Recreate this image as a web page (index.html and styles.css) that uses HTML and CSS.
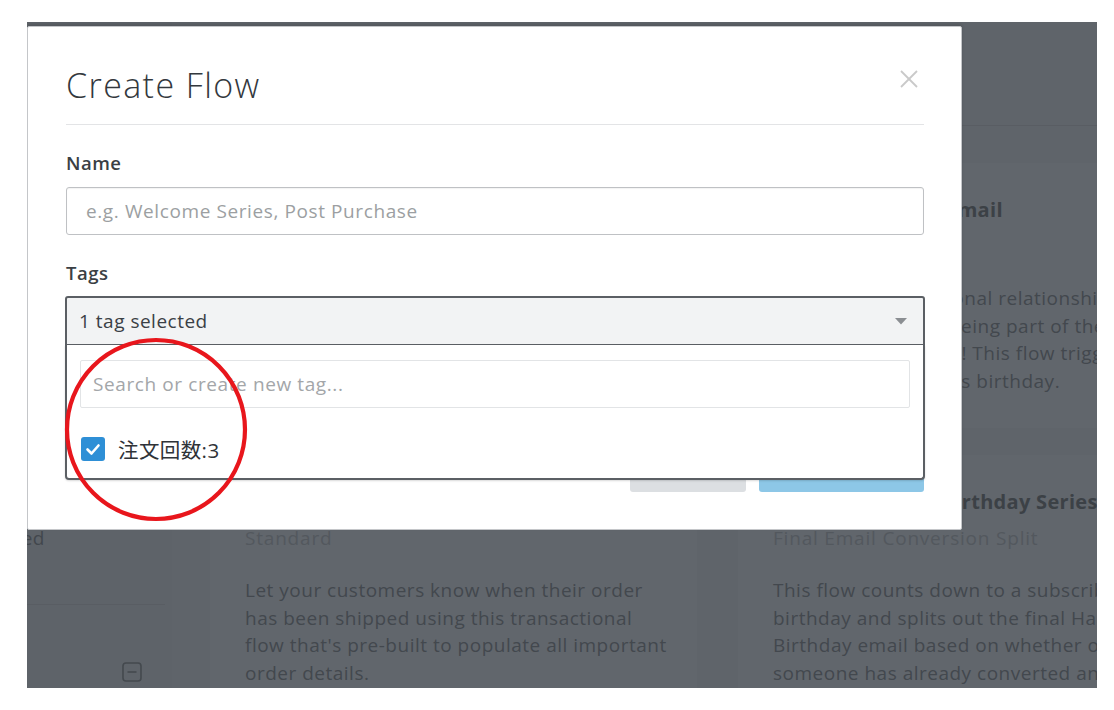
FILE: index.html
```html
<!DOCTYPE html>
<html lang="en">
<head>
<meta charset="utf-8">
<title>Create Flow</title>
<link rel="stylesheet" href="styles.css">
</head>
<body>
<div class="stage">
  <div class="app">
    <aside class="sidebar">
      <div class="side-item"><span class="side-label">Archived</span></div>
      <div class="side-sep"></div>
      <div class="side-foot">
        <svg class="collapse-icon" width="20" height="20" viewBox="0 0 20 20"><rect x="1" y="1" width="18" height="18" rx="3" fill="none" stroke="#44494e" stroke-width="1.6"/><line x1="5.5" y1="10" x2="14.5" y2="10" stroke="#44494e" stroke-width="1.6"/></svg>
      </div>
    </aside>
    <main class="main">
      <header class="main-head"><h1 class="main-title">Browse Flow Templates</h1></header>
      <div class="cards">
        <article class="card">
          <h3 class="card-title">Abandoned Cart Reminder</h3>
          <div class="card-sub">Standard</div>
          <p class="card-text">Recapture lost sales with this flow that<br>reminds customers about the items they<br>left behind in their cart.</p>
        </article>
        <article class="card">
          <h3 class="card-title">Annual Birthday Email</h3>
          <div class="card-sub">Standard</div>
          <p class="card-text">Create a more personal relationship<br>with customers by being part of their<br>special day this year! This flow triggers<br>on every subscriber's birthday.</p>
        </article>
        <article class="card">
          <h3 class="card-title">Shipping Confirmation</h3>
          <div class="card-sub">Standard</div>
          <p class="card-text">Let your customers know when their order<br>has been shipped using this transactional<br>flow that's pre-built to populate all important<br>order details.</p>
        </article>
        <article class="card">
          <h3 class="card-title">Countdown to a Birthday Series</h3>
          <div class="card-sub">Final Email Conversion Split</div>
          <p class="card-text">This flow counts down to a subscriber's<br>birthday and splits out the final Happy<br>Birthday email based on whether or not<br>someone has already converted and placed</p>
        </article>
      </div>
    </main>
  </div>

  <div class="modal">
    <div class="modal-head">
      <h2 class="modal-title">Create Flow</h2>
      <svg class="close-x" width="18" height="18" viewBox="0 0 18 18"><line x1="1" y1="1" x2="17" y2="17" stroke="#c9c9c9" stroke-width="1.8"/><line x1="17" y1="1" x2="1" y2="17" stroke="#c9c9c9" stroke-width="1.8"/></svg>
    </div>
    <div class="field">
      <label class="field-label">Name</label>
      <div class="text-input"><span class="placeholder">e.g. Welcome Series, Post Purchase</span></div>
    </div>
    <div class="field">
      <label class="field-label">Tags</label>
      <div class="tag-select">
        <div class="tag-value">1 tag selected</div>
        <svg class="caret" width="12" height="7" viewBox="0 0 12 7"><polygon points="0,0 12,0 6,6.5" fill="#8b8e92"/></svg>
        <div class="tag-menu">
          <div class="tag-search"><span class="placeholder">Search or create new tag...</span></div>
          <div class="tag-option">
            <span class="checkbox"><svg width="24" height="24" viewBox="0 0 24 24"><polyline points="6.5,12.5 10.5,16.5 17.5,8.5" fill="none" stroke="#fff" stroke-width="2.6" stroke-linecap="round" stroke-linejoin="round"/></svg></span>
            <span class="tag-name">注文回数:3</span>
          </div>
        </div>
      </div>
    </div>
    <div class="modal-foot">
      <button class="btn btn-cancel">Cancel</button>
      <button class="btn btn-primary">Create Flow</button>
    </div>
  </div>
</div>
<svg class="annotation" width="194" height="192" viewBox="0 0 194 192"><ellipse cx="96" cy="95.5" rx="89" ry="89.5" fill="none" stroke="#e8161c" stroke-width="4.2"/></svg>
</body>
</html>
```

FILE: styles.css
```css
* { box-sizing: border-box; }
html, body { margin: 0; padding: 0; }
body {
  width: 1114px;
  height: 710px;
  overflow: hidden;
  position: relative;
  background: #ffffff;
  font-family: "Open Sans", "Noto Sans", "Noto Sans CJK JP", sans-serif;
  color: #3b4045;
}

.stage {
  position: relative;
  margin: 22px 0 0 27px;
  width: 1070px;
  height: 666px;
  overflow: hidden;
  background: #5f646a;
}

/* dimmed app behind the modal */
.app {
  display: grid;
  grid-template-columns: 145px 1fr;
  height: 100%;
}
.sidebar {
  background: #5e6369;
  padding-top: 504px;
}
.side-item {
  height: 24px;
  font-size: 19px;
  line-height: 24px;
  letter-spacing: 0.5px;
}
.side-label {
  display: block;
  width: 200px;
  margin-left: -182px;
  text-align: right;
  color: #42474d;
}
.side-sep {
  margin-top: 54px;
  width: 138px;
  height: 1px;
  background: #595d63;
}
.side-foot {
  display: flex;
  justify-content: flex-end;
  padding: 57px 30px 0 0;
}
.collapse-icon { display: block; }

.main { background: #5f646a; }
.main-head {
  height: 104px;
  border-bottom: 1px solid #595d63;
  padding: 30px 38px 0;
}
.main-title {
  margin: 0;
  font-size: 28px;
  font-weight: 400;
  color: #3d4247;
}
.cards {
  display: grid;
  grid-template-columns: 487px 487px;
  grid-auto-rows: 265px;
  column-gap: 41px;
  row-gap: 27px;
  padding: 37px 0 0 38px;
}
.card {
  background: #61666c;
  padding: 35px 35px 0 35px;
}
.card-title {
  margin: 0;
  font-size: 20px;
  line-height: 24px;
  font-weight: 700;
  letter-spacing: 0.3px;
  color: #3c4146;
  white-space: nowrap;
}
.card-sub {
  margin-top: 11px;
  font-size: 19px;
  line-height: 27px;
  letter-spacing: 0.8px;
  color: #53585e;
  white-space: nowrap;
}
.card-text {
  margin: 25px 0 0;
  font-size: 19px;
  line-height: 27.5px;
  letter-spacing: 0.5px;
  color: #43484e;
  white-space: nowrap;
}

/* modal */
.modal {
  position: absolute;
  left: 0;
  top: 4px;
  width: 935px;
  background: #ffffff;
  border: 1px solid #c4c6c9;
  border-radius: 2px;
  padding: 0 37px 37px 38px;
  box-shadow: 0 -2px 3px rgba(0,0,0,0.12);
}
.modal-head {
  display: flex;
  justify-content: space-between;
  align-items: flex-start;
  padding: 38px 0 18px;
  border-bottom: 1px solid #e3e4e6;
}
.modal-title {
  margin: 0;
  font-size: 34px;
  line-height: 41px;
  font-weight: 300;
  letter-spacing: 1.4px;
  color: #33383d;
}
.close-x {
  display: block;
  margin: 5px 6px 0 0;
}
.field { display: flex; flex-direction: column; }
.field-label {
  margin-top: 27px;
  font-size: 18.5px;
  line-height: 22px;
  font-weight: 600;
  letter-spacing: 0.5px;
  color: #3a3f44;
}
.text-input {
  margin-top: 13px;
  height: 48px;
  border: 1px solid #bfc1c4;
  border-radius: 3px;
  display: flex;
  align-items: center;
  padding-left: 19px;
  box-shadow: inset 0 1px 1px rgba(0,0,0,0.05);
}
.placeholder {
  font-size: 19px;
  letter-spacing: 0.6px;
  color: #9c9fa2;
}
.tag-select {
  position: relative;
  margin: 12px -1px 0;
  height: 49px;
  background: #f2f3f4;
  border: 2px solid #5b5f64;
  border-bottom-width: 1px;
  border-radius: 3px 3px 0 0;
  display: flex;
  align-items: center;
  justify-content: space-between;
  padding: 0 16px 0 12px;
}
.tag-value {
  font-size: 19px;
  letter-spacing: 0.5px;
  color: #3b4045;
}
.caret { display: block; }
.tag-menu {
  position: absolute;
  top: 100%;
  left: -2px;
  right: -2px;
  margin-top: 1px;
  background: #ffffff;
  border: 2px solid #5b5f64;
  border-top: none;
  border-radius: 0 0 4px 4px;
  padding: 15px 13px 17px;
  box-shadow: 0 1px 2px rgba(0,0,0,0.15);
  z-index: 2;
}
.tag-search {
  height: 48px;
  border: 1px solid #e2e4e6;
  border-radius: 2px;
  display: flex;
  align-items: center;
  padding-left: 12px;
}
.tag-search .placeholder { font-size: 19px; color: #a3a6a9; }
.tag-option {
  margin-top: 29px;
  height: 24px;
  display: flex;
  align-items: center;
  gap: 13px;
  padding-left: 1px;
}
.checkbox {
  width: 24px;
  height: 24px;
  border-radius: 3px;
  background: #2e8fd6;
  display: block;
}
.checkbox svg { display: block; }
.tag-name {
  font-family: "Open Sans", "Noto Sans CJK JP", sans-serif;
  font-size: 20.5px;
  letter-spacing: 0.4px;
  color: #2f3338;
}
.modal-foot {
  margin-top: 99px;
  display: flex;
  justify-content: flex-end;
  gap: 13px;
}
.btn {
  height: 48px;
  border: none;
  border-radius: 3px;
  font-family: "Open Sans", sans-serif;
  font-size: 17px;
}
.btn-cancel { width: 116px; background: #dcdfe2; color: #3b4045; }
.btn-primary { width: 165px; background: #8dc7e7; color: #ffffff; }

.annotation {
  position: absolute;
  left: 60px;
  top: 334px;
  z-index: 10;
}
```
